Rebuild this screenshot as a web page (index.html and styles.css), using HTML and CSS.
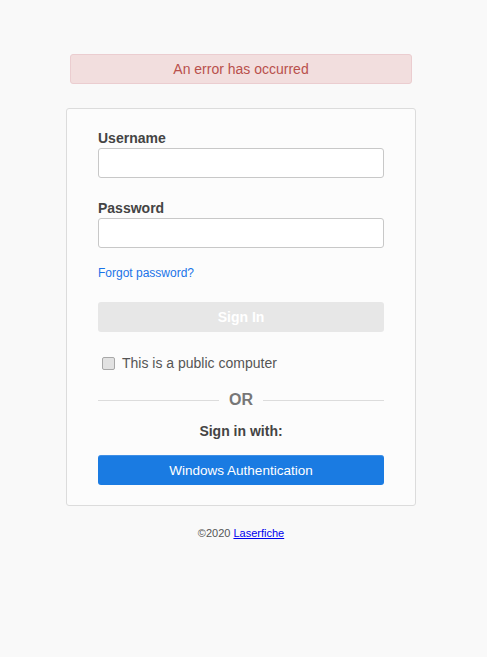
FILE: index.html
```html
<!DOCTYPE html>
<html lang="en">
<head>
  <meta charset="UTF-8">
  <meta name="viewport" content="width=device-width, initial-scale=1.0">
  <title>Sign In</title>
  <link rel="stylesheet" href="styles.css">
</head>
<body>
  <div class="page">
    <div class="alert">An error has occurred</div>

    <form class="card" id="login-form">
      <div class="form-group">
        <label for="username">Username</label>
        <input type="text" id="username">
      </div>
      <div class="form-group">
        <label for="password">Password</label>
        <input type="password" id="password">
      </div>
      <a href="#" class="forgot">Forgot password?</a>
      <button type="submit" class="btn-signin" disabled>Sign In</button>
      <label class="check">
        <input type="checkbox" id="public-computer">
        <span>This is a public computer</span>
      </label>
      <div class="divider"><span>OR</span></div>
      <div class="sign-with">Sign in with:</div>
      <button type="button" class="btn-windows">Windows Authentication</button>
    </form>

    <div class="footer">&copy;2020 <a href="#">Laserfiche</a></div>
  </div>
</body>
</html>
```

FILE: styles.css
```css
body {
  margin: 0;
  font-family: "Liberation Sans", Arial, sans-serif;
  background-color: #f9f9f9;
  color: #444;
}

.page {
  width: 350px;
  margin-left: 66px;
  padding-top: 54px;
}

.alert {
  margin: 0 4px;
  height: 30px;
  line-height: 28px;
  box-sizing: border-box;
  border: 1px solid #ebcdd0;
  border-radius: 3px;
  background-color: #f2dede;
  color: #b9504c;
  font-size: 14px;
  text-align: center;
}

.card {
  display: flex;
  flex-direction: column;
  margin-top: 24px;
  padding: 19px 31px 20px;
  border: 1px solid #dcdcdc;
  border-radius: 3px;
  background-color: #fcfcfc;
}

.form-group {
  display: flex;
  flex-direction: column;
  margin-bottom: 20px;
}

.form-group label {
  font-size: 14px;
  font-weight: bold;
  line-height: 20px;
  color: #444;
}

.form-group input {
  height: 30px;
  box-sizing: border-box;
  border: 1px solid #c8c8c8;
  border-radius: 3px;
  background: #fff;
  padding: 4px 8px;
  font-size: 14px;
}

.forgot {
  margin-top: -3px;
  align-self: flex-start;
  font-size: 12px;
  line-height: 17px;
  color: #1a73e8;
  text-decoration: none;
}

.btn-signin,
.btn-windows {
  height: 30px;
  border: none;
  border-radius: 3px;
  font-family: inherit;
  font-size: 14px;
}

.btn-signin {
  margin-top: 20px;
  background-color: #e7e7e7;
  color: #fff;
  font-weight: bold;
}

.check {
  display: flex;
  align-items: center;
  margin-top: 21px;
  padding-left: 4px;
  font-size: 14px;
  line-height: 20px;
  color: #555;
}

.check input {
  appearance: none;
  width: 13px;
  height: 13px;
  margin: 0 7px 0 0;
  border: 1px solid #a8a8a8;
  border-radius: 2px;
  background-color: #e2e2e2;
}

.divider {
  display: flex;
  align-items: center;
  gap: 10px;
  margin-top: 17px;
  font-size: 16px;
  font-weight: bold;
  color: #777;
  line-height: 20px;
}

.divider::before,
.divider::after {
  content: "";
  flex: 1;
  border-top: 1px solid #dcdcdc;
}

.sign-with {
  margin-top: 11px;
  text-align: center;
  font-size: 14px;
  font-weight: bold;
  line-height: 20px;
  color: #444;
}

.btn-windows {
  margin-top: 14px;
  padding-bottom: 2px;
  background-color: #1a7be2;
  border-top: 1px solid #3f8fe6;
  color: #fff;
  font-size: 13.5px;
}

.footer {
  margin-top: 21px;
  text-align: center;
  font-size: 11px;
  color: #555;
}

.footer a {
  color: #00e;
}
```
